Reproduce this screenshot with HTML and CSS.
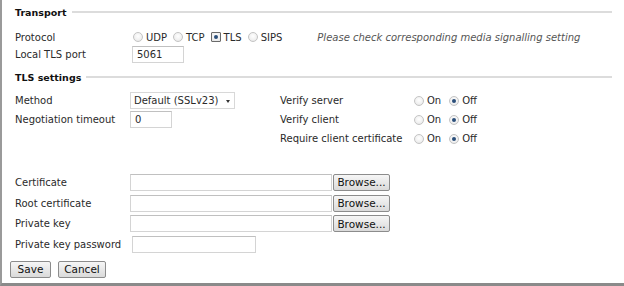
FILE: index.html
```html
<!DOCTYPE html>
<html>
<head>
<meta charset="utf-8">
<link rel="stylesheet" href="styles.css">
</head>
<body>
<div class="panel">
  <section class="group">
    <div class="legend"><span class="legend-text">Transport</span><span class="rule"></span></div>
    <div class="row r-proto">
      <span class="lbl">Protocol</span>
      <span class="opts proto">
        <span class="opt"><span class="radio"></span>UDP</span>
        <span class="opt"><span class="radio"></span>TCP</span>
        <span class="opt"><span class="radio checked focus"></span>TLS</span>
        <span class="opt"><span class="radio"></span>SIPS</span>
      </span>
      <span class="note">Please check corresponding media signalling setting</span>
    </div>
    <div class="row r-port">
      <span class="lbl">Local TLS port</span>
      <span class="input w-port">5061</span>
    </div>
  </section>
  <section class="group">
    <div class="legend"><span class="legend-text">TLS settings</span><span class="rule"></span></div>
    <div class="tls">
      <span class="lbl">Method</span>
      <span class="cell"><span class="select">Default (SSLv23)<span class="caret"></span></span></span>
      <span class="lbl2">Verify server</span>
      <span class="opts onoff"><span class="opt"><span class="radio"></span>On</span><span class="opt"><span class="radio checked"></span>Off</span></span>

      <span class="lbl">Negotiation timeout</span>
      <span class="cell"><span class="input w-timeout">0</span></span>
      <span class="lbl2">Verify client</span>
      <span class="opts onoff"><span class="opt"><span class="radio"></span>On</span><span class="opt"><span class="radio checked"></span>Off</span></span>

      <span class="lbl"></span>
      <span class="cell"></span>
      <span class="lbl2">Require client certificate</span>
      <span class="opts onoff"><span class="opt"><span class="radio"></span>On</span><span class="opt"><span class="radio checked"></span>Off</span></span>
    </div>
    <div class="files">
      <div class="frow"><span class="lbl">Certificate</span><span class="input w-file"></span><span class="btn browse">Browse...</span></div>
      <div class="frow"><span class="lbl">Root certificate</span><span class="input w-file"></span><span class="btn browse">Browse...</span></div>
      <div class="frow"><span class="lbl">Private key</span><span class="input w-file"></span><span class="btn browse">Browse...</span></div>
      <div class="frow"><span class="lbl">Private key password</span><span class="input w-pass"></span></div>
    </div>
  </section>
  <div class="actions">
    <span class="btn save">Save</span>
    <span class="btn cancel">Cancel</span>
  </div>
</div>
</body>
</html>
```
FILE: styles.css
```css
html, body { margin: 0; padding: 0; background: #fff; }
body {
  font-family: "DejaVu Sans", Verdana, sans-serif;
  font-size: 10px;
  color: #2a2a2a;
  width: 624px;
  height: 286px;
  overflow: hidden;
}
.panel {
  box-sizing: border-box;
  width: 624px;
  height: 286px;
  border-left: 2px solid #9a9a9a;
  border-bottom: 3px solid #8a8a8a;
  padding: 5px 12px 0 0;
}
.legend {
  display: flex;
  align-items: center;
  height: 14px;
  padding-left: 13px;
}
.legend-text {
  font-weight: bold;
  font-size: 9.5px;
  color: #111;
  padding-right: 5px;
}
.rule {
  flex: 1;
  height: 0;
  border-top: 2px solid #dcdcdc;
}
.row {
  display: flex;
  align-items: center;
  padding-left: 13px;
}
.r-proto { height: 18px; margin-top: 9px; }
.r-port { height: 17px; }
.lbl { width: 115px; flex: none; }
.opts { display: flex; align-items: center; }
.proto { margin-left: 3px; }
.opt { display: flex; align-items: center; margin-right: 6px; }
.radio {
  box-sizing: border-box;
  width: 10px;
  height: 10px;
  border-radius: 50%;
  border: 1px solid #c4c4c4;
  background: radial-gradient(circle at 50% 40%, #fff 0, #f0f0f0 60%, #dedede 100%);
  margin-right: 3px;
  position: relative;
}
.radio.checked::after {
  content: "";
  position: absolute;
  left: 2px; top: 2px;
  width: 4px; height: 4px;
  border-radius: 50%;
  background: #2b4f7a;
}
.radio.focus { border-radius: 1px; border-color: #6a6a6a; }
.note {
  font-style: italic;
  color: #555;
  margin-left: 29px;
}
.input {
  box-sizing: border-box;
  display: inline-flex;
  align-items: center;
  height: 17px;
  border: 1px solid #d4d4d4;
  border-top-color: #c0c0c0;
  padding-left: 4px;
  background: #fff;
}
.w-port { width: 52px; margin-left: 2px; }
.group + .group { margin-top: 7px; }
.tls {
  display: grid;
  grid-template-columns: 115px 150px 133px auto;
  grid-auto-rows: 19px;
  align-items: center;
  padding-left: 13px;
  margin-top: 7px;
}
.cell { display: flex; align-items: center; }
.select {
  box-sizing: border-box;
  display: inline-flex;
  align-items: center;
  width: 105px;
  height: 17px;
  border: 1px solid #d8d8d8;
  padding-left: 3px;
  position: relative;
}
.caret {
  position: absolute;
  right: 4px; top: 7px;
  border-left: 2.5px solid transparent;
  border-right: 2.5px solid transparent;
  border-top: 3px solid #333;
}
.w-timeout { width: 42px; }
.onoff { margin-left: 1px; }
.onoff .opt { margin-right: 8px; }
.files { margin-top: 24px; padding-left: 13px; }
.frow { display: flex; align-items: center; height: 20.7px; }
.w-file { width: 202px; }
.w-pass { width: 124px; margin-left: 2px; }
.btn {
  box-sizing: border-box;
  display: inline-flex;
  align-items: center;
  justify-content: center;
  height: 17px;
  border: 1px solid #8c8c8c;
  border-radius: 2px;
  background: linear-gradient(#f6f6f6, #dadada);
  color: #111;
  font-size: 10.5px;
}
.browse { width: 57px; margin-left: 1px; }
.actions { display: flex; gap: 7px; padding-left: 8px; margin-top: 6px; }
.save { width: 41px; }
.cancel { width: 48px; }
```
